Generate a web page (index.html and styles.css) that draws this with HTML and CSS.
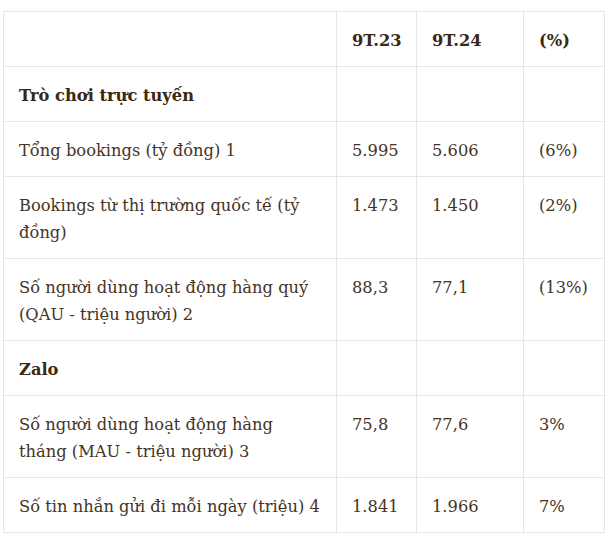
FILE: index.html
```html
<!DOCTYPE html>
<html lang="vi">
<head>
<meta charset="utf-8">
<link rel="stylesheet" href="styles.css">
</head>
<body>
<table class="data">
  <colgroup>
    <col class="c-label"><col class="c-a"><col class="c-b"><col class="c-c">
  </colgroup>
  <tr class="head"><td></td><td>9T.23</td><td>9T.24</td><td>(%)</td></tr>
  <tr class="section"><td>Trò chơi trực tuyến</td><td></td><td></td><td></td></tr>
  <tr><td>Tổng bookings (tỷ đồng) 1</td><td>5.995</td><td>5.606</td><td>(6%)</td></tr>
  <tr><td>Bookings từ thị trường quốc tế (tỷ đồng)</td><td>1.473</td><td>1.450</td><td>(2%)</td></tr>
  <tr><td>Số người dùng hoạt động hàng quý (QAU - triệu người) 2</td><td>88,3</td><td>77,1</td><td>(13%)</td></tr>
  <tr class="section"><td>Zalo</td><td></td><td></td><td></td></tr>
  <tr><td>Số người dùng hoạt động hàng tháng (MAU - triệu người) 3</td><td>75,8</td><td>77,6</td><td>3%</td></tr>
  <tr><td>Số tin nhắn gửi đi mỗi ngày (triệu) 4</td><td>1.841</td><td>1.966</td><td>7%</td></tr>
</table>
</body>
</html>
```
FILE: styles.css
```css
html, body {
  margin: 0;
  background: #fff;
}
body {
  padding: 11px 0 0 3px;
  font-family: "DejaVu Serif", "Liberation Serif", serif;
  font-size: 16.3px;
  color: #47341f;
}
.data {
  border-collapse: collapse;
  table-layout: fixed;
  width: 601px;
}
.c-label { width: 333px; }
.c-a { width: 80px; }
.c-b { width: 107px; }
.c-c { width: 81px; }
.data td {
  border: 1px solid #e6e6e6;
  padding: 15px 15px 12px;
  line-height: 27px;
  vertical-align: top;
  text-align: left;
}
.head td, .section td {
  font-weight: bold;
  color: #3a2812;
}
```
